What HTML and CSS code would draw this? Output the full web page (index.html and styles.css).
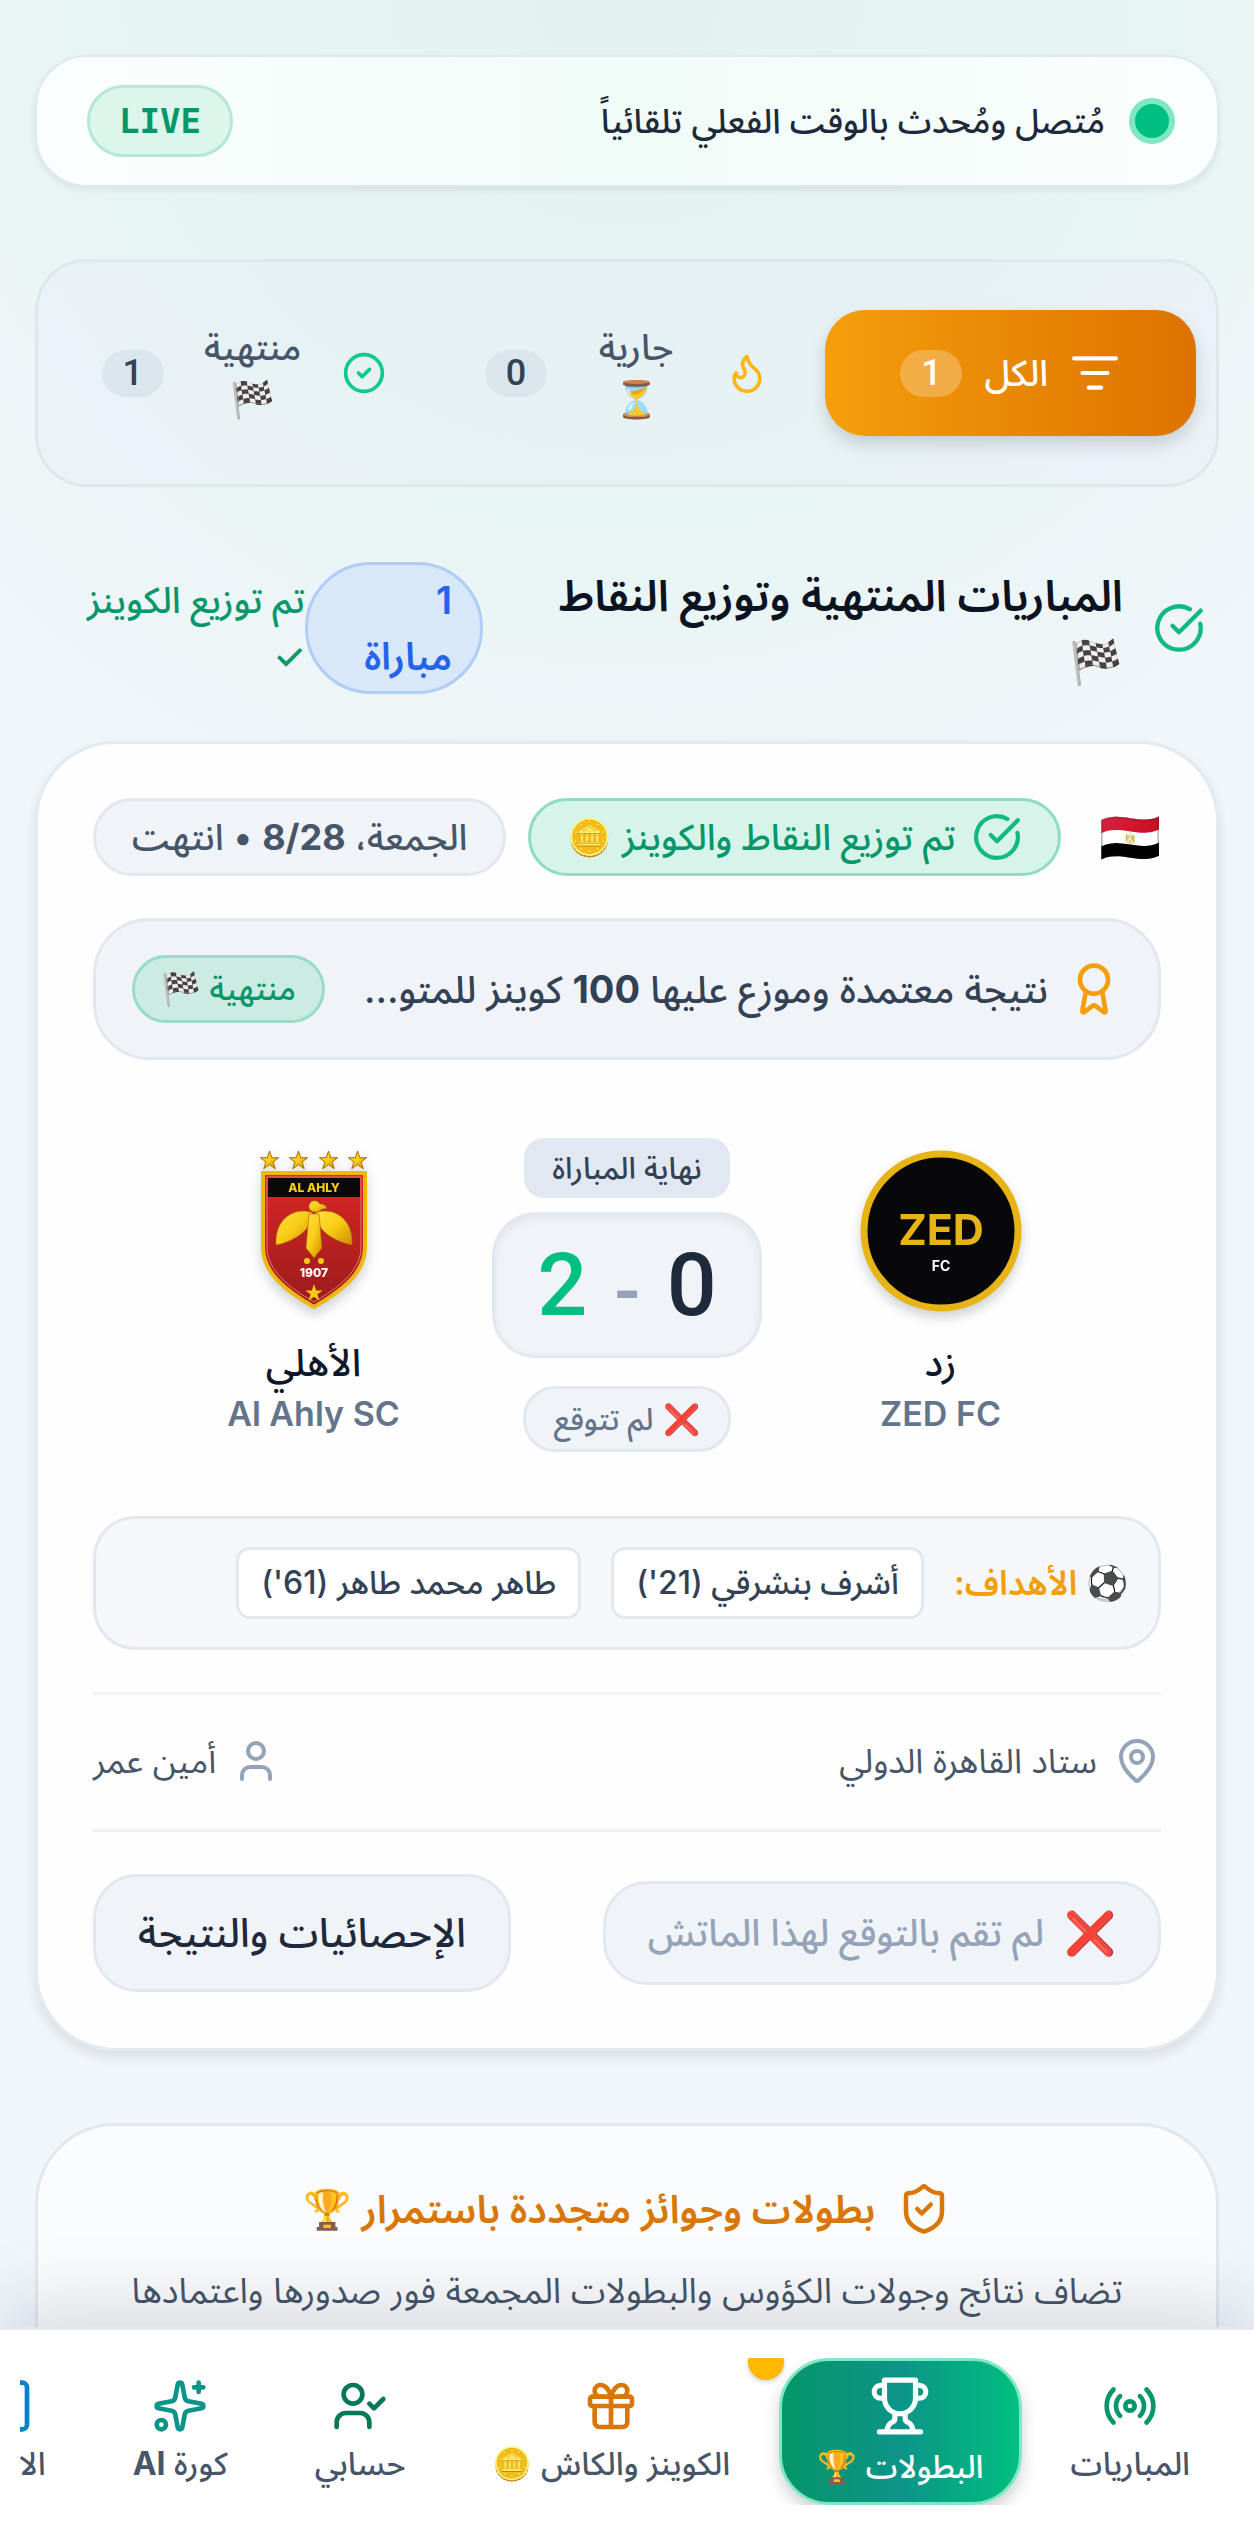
FILE: index.html
```html
<!DOCTYPE html>
<html lang="ar" dir="rtl">
<head>
  <meta charset="UTF-8">
  <meta name="viewport" content="width=device-width, initial-scale=1.0">
  <meta name="theme-color" content="#059669">
  <title>البطولات</title>
  <link rel="stylesheet" href="styles.css">
</head>
<body>
  <!-- Shared icons -->
  <svg class="hidden" aria-hidden="true">
    <symbol id="icon-check" viewBox="0 0 24 24">
      <path d="M21.8 10A10 10 0 1 1 17 3.335"/>
      <path d="m9 11 3 3L22 4"/>
    </symbol>
    <symbol id="star" viewBox="0 0 20 20">
      <path d="M10 0l2.4 7.1h7.2l-5.8 4.4 2.2 7.2-6-4.4-6 4.4 2.2-7.2L.4 7.1h7.2z"/>
    </symbol>
  </svg>

  <main class="content">
    <div class="live-bar">
      <span class="live-dot"></span>
      <p>مُتصل ومُحدث بالوقت الفعلي تلقائياً</p>
      <span class="live-tag">LIVE</span>
    </div>

    <div class="filters">
      <button class="filter active">
        <svg class="icon" viewBox="0 0 24 24"><path d="M2 5h20M6 12h12M9 19h6"/></svg>
        <span>الكل</span>
        <span class="count">1</span>
      </button>
      <button class="filter">
        <svg class="icon flame" viewBox="0 0 24 24"><path d="M8.5 14.5A2.5 2.5 0 0 0 11 12c0-1.38-.5-2-1-3-1.072-2.143-.224-4.054 2-6 .5 2.5 2 4.9 4 6.5 2 1.6 3 3.5 3 5.5a7 7 0 1 1-14 0c0-1.153.433-2.294 1-3a2.5 2.5 0 0 0 2.5 2.5z"/></svg>
        <span class="filter-label">جارية ⏳</span>
        <span class="count">0</span>
      </button>
      <button class="filter">
        <svg class="icon done" viewBox="0 0 24 24"><circle cx="12" cy="12" r="10"/><path d="m9 12 2 2 4-4"/></svg>
        <span class="filter-label">منتهية 🏁</span>
        <span class="count">1</span>
      </button>
    </div>

    <div class="section-head">
      <svg class="icon" viewBox="0 0 24 24"><use href="#icon-check"/></svg>
      <h2>المباريات المنتهية وتوزيع النقاط 🏁</h2>
      <span class="match-count">1 مباراة</span>
      <span class="paid">تم توزيع الكوينز ✓</span>
    </div>

    <article class="match">
      <div class="match-top">
        <span class="flag">🇪🇬</span>
        <span class="pill pill-green">
          <svg class="icon" viewBox="0 0 24 24"><use href="#icon-check"/></svg>
          تم توزيع النقاط والكوينز 🪙
        </span>
        <span class="pill"><span>الجمعة، <b>8/28</b> • انتهت</span></span>
      </div>

      <div class="notice">
        <svg class="icon" viewBox="0 0 24 24"><path d="m15.477 12.89 1.515 8.526a.5.5 0 0 1-.81.47l-3.58-2.687a1 1 0 0 0-1.197 0l-3.586 2.686a.5.5 0 0 1-.81-.469l1.514-8.526"/><circle cx="12" cy="8" r="6"/></svg>
        <p>نتيجة معتمدة وموزع عليها <b>100</b> كوينز للمتوقعين</p>
        <span class="tag">منتهية 🏁</span>
      </div>

      <div class="teams">
        <div class="team">
          <svg class="crest" viewBox="0 0 162 162">
            <circle cx="81" cy="81" r="77" fill="#08080a" stroke="#e7b416" stroke-width="7"/>
            <text x="81" y="95" font-size="43" font-weight="700" fill="#e7b416">ZED</text>
            <text x="81" y="121" font-size="14" font-weight="700" fill="#fff">FC</text>
          </svg>
          <h3>زد</h3>
          <span class="team-en">ZED FC</span>
        </div>

        <div class="result">
          <span class="result-state">نهاية المباراة</span>
          <div class="score">
            <span>0</span>
            <span class="dash">-</span>
            <span class="winner">2</span>
          </div>
          <span class="result-guess"><span class="cross">❌</span> لم تتوقع</span>
        </div>

        <div class="team">
          <svg class="crest" viewBox="0 0 110 162">
            <defs>
              <linearGradient id="gold" x1="0" y1="0" x2="1" y2="1">
                <stop offset="0" stop-color="#fde047"/>
                <stop offset="0.5" stop-color="#facc15"/>
                <stop offset="1" stop-color="#ca8a04"/>
              </linearGradient>
              <linearGradient id="red" x1="0" y1="0" x2="0" y2="1">
                <stop offset="0" stop-color="#dc2626"/>
                <stop offset="1" stop-color="#991b1b"/>
              </linearGradient>
            </defs>
            <g fill="url(#gold)" stroke="#a16207">
              <use href="#star" x="1" y="1" width="19" height="19"/>
              <use href="#star" x="30" y="1" width="19" height="19"/>
              <use href="#star" x="60" y="1" width="19" height="19"/>
              <use href="#star" x="89" y="1" width="19" height="19"/>
            </g>
            <path d="M4 23h102v74c0 27-25 45-51 60C29 142 4 124 4 97z" fill="url(#red)" stroke="#efb810" stroke-width="4"/>
            <path d="M8 27h94v70c0 24-23 41-47 55C31 138 8 121 8 97z" fill="none" stroke="#e8776e"/>
            <path d="M9 28h92v19H9z" fill="#0a0a0a"/>
            <text x="55" y="42" font-size="12" font-weight="800" fill="#facc15">AL AHLY</text>
            <g fill="url(#gold)" stroke="#a16207" stroke-width=".6">
              <path d="M54 63C37 56 15 68 17 95c12-2 28-10 33-20z"/>
              <path d="M56 63c17-7 39 5 37 32-12-2-28-10-33-20z"/>
              <path d="M50 64h10l3 34-8 10-8-10z"/>
              <path d="M50 58c-1-7 7-10 11-4 4 0 7 2 7 5-4-1-6 1-9 3-3 0-8 0-9-4z"/>
            </g>
            <circle cx="48" cy="111" r="3" fill="#facc15"/>
            <circle cx="62" cy="111" r="3" fill="#facc15"/>
            <text x="55" y="127" font-size="12" font-weight="800" fill="#fff">1907</text>
            <use href="#star" x="46" y="134" width="18" height="18" fill="#facc15"/>
          </svg>
          <h3>الأهلي</h3>
          <span class="team-en">Al Ahly SC</span>
        </div>
      </div>

      <div class="goals">
        <span class="goals-title">⚽ الأهداف:</span>
        <span class="goal">أشرف بنشرقي (21')</span>
        <span class="goal">طاهر محمد طاهر (61')</span>
      </div>

      <div class="meta">
        <span>
          <svg class="icon" viewBox="0 0 24 24"><path d="M20 10c0 4.993-5.539 10.193-7.399 11.799a1 1 0 0 1-1.202 0C9.539 20.193 4 14.993 4 10a8 8 0 0 1 16 0"/><circle cx="12" cy="10" r="3"/></svg>
          ستاد القاهرة الدولي
        </span>
        <span>
          <svg class="icon" viewBox="0 0 24 24"><path d="M19 21v-2a4 4 0 0 0-4-4H9a4 4 0 0 0-4 4v2"/><circle cx="12" cy="7" r="4"/></svg>
          أمين عمر
        </span>
      </div>

      <div class="actions">
        <button class="btn btn-muted" disabled><span class="cross">❌</span> لم تقم بالتوقع لهذا الماتش</button>
        <button class="btn">الإحصائيات والنتيجة</button>
      </div>
    </article>

    <section class="promo">
      <h2>
        <svg class="icon" viewBox="0 0 24 24"><path d="M20 13c0 5-3.500 7.500-7.660 8.950a1 1 0 0 1-.67-.01C7.500 20.500 4 18 4 13V6a1 1 0 0 1 1-1c2 0 4.500-1.200 6.240-2.720a1.170 1.170 0 0 1 1.520 0C14.510 3.810 17 5 19 5a1 1 0 0 1 1 1z"/><path d="m9 12 2 2 4-4"/></svg>
        بطولات وجوائز متجددة باستمرار 🏆
      </h2>
      <p>تضاف نتائج وجولات الكؤوس والبطولات المجمعة فور صدورها واعتمادها</p>
    </section>
  </main>

  <nav class="bottom-nav">
    <div class="nav-track">
      <a href="#" class="nav-item matches">
        <svg class="icon" viewBox="0 0 24 24"><path d="M16.247 7.761a6 6 0 0 1 0 8.478M19.075 4.933a10 10 0 0 1 0 14.134M4.925 19.067a10 10 0 0 1 0-14.134M7.753 16.239a6 6 0 0 1 0-8.478"/><circle cx="12" cy="12" r="2"/></svg>
        <span>المباريات</span>
      </a>
      <a href="#" class="nav-item active">
        <svg class="icon" viewBox="0 0 24 24"><path d="M6 9H4.500a2.500 2.500 0 0 1 0-5H6M18 9h1.500a2.500 2.500 0 0 0 0-5H18M4 22h16M10 14.660V17c0 .55-.47.98-.97 1.210C7.850 18.750 7 20.240 7 22M14 14.660V17c0 .55.47.98.97 1.210C16.150 18.750 17 20.240 17 22M18 2H6v7a6 6 0 0 0 12 0V2Z"/></svg>
        <span>البطولات 🏆</span>
      </a>
      <a href="#" class="nav-item coins">
        <svg class="icon" viewBox="0 0 24 24"><rect x="3" y="8" width="18" height="4" rx="1"/><path d="M12 8v13M19 12v7a2 2 0 0 1-2 2H7a2 2 0 0 1-2-2v-7M7.500 8a2.500 2.500 0 0 1 0-5A4.800 8 0 0 1 12 8a4.800 8 0 0 1 4.500-5 2.500 2.500 0 0 1 0 5"/></svg>
        <span>الكوينز والكاش 🪙</span>
        <i class="nav-badge"></i>
      </a>
      <a href="#" class="nav-item account">
        <svg class="icon" viewBox="0 0 24 24"><path d="m16 11 2 2 4-4M16 21v-2a4 4 0 0 0-4-4H6a4 4 0 0 0-4 4v2"/><circle cx="9" cy="7" r="4"/></svg>
        <span>حسابي</span>
      </a>
      <a href="#" class="nav-item ai">
        <svg class="icon" viewBox="0 0 24 24"><path d="M11.017 2.814a1 1 0 0 1 1.966 0l1.051 5.558a2 2 0 0 0 1.594 1.594l5.558 1.051a1 1 0 0 1 0 1.966l-5.558 1.051a2 2 0 0 0-1.594 1.594l-1.051 5.558a1 1 0 0 1-1.966 0l-1.051-5.558a2 2 0 0 0-1.594-1.594l-5.558-1.051a1 1 0 0 1 0-1.966l5.558-1.051a2 2 0 0 0 1.594-1.594zM20 2v4M22 4h-4"/><circle cx="4" cy="20" r="2"/></svg>
        <span>كورة <b>AI</b></span>
      </a>
      <a href="#" class="nav-item news">
        <svg class="icon" viewBox="0 0 24 24"><rect x="3" y="2" width="18" height="20" rx="2"/><path d="M7 7h10M7 12h10M7 17h6"/></svg>
        <span>الاخبار</span>
      </a>
    </div>
  </nav>
</body>
</html>
```

FILE: styles.css
```css
:root {
  --text: #1e293b;
  --text-soft: #475569;
  --text-muted: #64748b;
  --surface: #f0f4f9;
  --border: #e2e8f0;
  --green: #059669;
  --green-bright: #10b981;
  --amber: #d97706;
  --font: Inter, "Noto Sans Arabic", "Noto Sans", "DejaVu Sans", sans-serif;
}

* {
  box-sizing: border-box;
}

body {
  height: 100vh;
  margin: 0;
  display: flex;
  flex-direction: column;
  font-family: var(--font);
  font-size: 34px;
  font-weight: 500;
  line-height: 52px;
  color: var(--text);
  background: radial-gradient(ellipse 75% 900px at 50% 0, #e3f2f1, #e7f4f4 55%, #f1f6fa);
}

h2, h3, p {
  margin: 0;
}

button {
  font: inherit;
  color: inherit;
  cursor: pointer;
}

.hidden {
  position: absolute;
  width: 0;
  height: 0;
}

.icon {
  flex: none;
  width: 44px;
  height: 44px;
  fill: none;
  stroke: currentColor;
  stroke-width: 2;
  stroke-linecap: round;
  stroke-linejoin: round;
}

.content {
  flex: 1;
  min-height: 0;
  overflow: hidden;
  padding: 55px 35px 0;
}

/* Live bar */
.live-bar {
  display: flex;
  align-items: center;
  gap: 24px;
  height: 132px;
  padding: 0 42px 0 50px;
  border: 2px solid #dfe9ec;
  border-radius: 52px;
  background: linear-gradient(90deg, #fbfefe, #f0fcf7, #fbfefe);
  box-shadow: 0 3px 6px rgba(15, 23, 42, 0.08);
}

.live-dot {
  width: 46px;
  height: 46px;
  border: 6px solid #7fe7c4;
  border-radius: 50%;
  background: #00bf80;
}

.live-tag {
  margin-right: auto;
  padding: 7px 29px;
  border: 3px solid #b5e8d6;
  border-radius: 36px;
  background: #dcf6ec;
  color: var(--green);
  font-family: "DejaVu Sans Mono", monospace;
  font-weight: 700;
}

/* Filters */
.filters {
  display: grid;
  grid-template-columns: repeat(3, 1fr);
  align-items: center;
  gap: 12px;
  height: 228px;
  margin-top: 72px;
  padding: 0 20px;
  border: 3px solid #dde7ec;
  border-radius: 52px;
  background: rgba(232, 239, 246, 0.5);
}

.filter {
  display: flex;
  align-items: center;
  justify-content: center;
  gap: 22px;
  height: 126px;
  padding: 0 32px;
  border: 0;
  border-radius: 40px;
  background: none;
  color: var(--text-soft);
  font-size: 36px;
}

.filter.active {
  background: linear-gradient(90deg, #f59e0b, #dd7200);
  box-shadow: 0 8px 16px rgba(15, 23, 42, 0.16);
  color: #fff;
}

.filter.active .icon {
  width: 50px;
  height: 50px;
}

.filter-label {
  width: 134px;
  padding: 0 10px;
}

.flame {
  color: #fbb614;
}

.done {
  color: #10c98c;
}

.count {
  min-width: 62px;
  border-radius: 24px;
  background: #dbe6ec;
  color: #334155;
  font-family: Roboto, sans-serif;
  line-height: 47px;
}

.active .count {
  background: rgba(255, 255, 255, 0.25);
  color: #fff;
}

/* Section heading */
.section-head {
  display: flex;
  align-items: center;
  margin: 75px 14px 47px 44px;
}

.section-head .icon {
  width: 52px;
  height: 52px;
  margin-left: 30px;
  color: var(--green-bright);
}

.section-head h2 {
  flex: 1;
  padding-left: 40px;
  font-size: 43px;
  font-weight: 600;
  line-height: 66px;
  color: #0b1220;
}

.match-count {
  width: 178px;
  padding: 7px 28px 7px 40px;
  border: 3px solid #b0cdf5;
  border-radius: 66px;
  background: #d9e8f9;
  color: #2563eb;
  font-size: 38px;
  font-weight: 600;
  line-height: 56px;
}

.paid {
  width: 226px;
  color: var(--green);
  font-size: 36px;
  line-height: 56px;
}

/* Match card */
.match {
  padding: 54px 55px 56px;
  border: 3px solid #e3eaf0;
  border-radius: 80px;
  background: #fefefe;
  box-shadow: 0 6px 12px rgba(15, 23, 42, 0.1);
}

.match-top {
  display: flex;
  align-items: center;
  gap: 22px;
}

.flag {
  margin-left: auto;
  font-size: 50px;
}

.pill {
  display: flex;
  align-items: center;
  gap: 16px;
  height: 78px;
  padding: 0 36px;
  border: 3px solid var(--border);
  border-radius: 39px;
  background: var(--surface);
  color: var(--text-soft);
  font-size: 36px;
  white-space: nowrap;
}

.pill-green {
  border-color: #8fdcc0;
  background: #d6f4e9;
  color: var(--green);
}

.pill .icon {
  width: 50px;
  height: 50px;
  color: var(--green-bright);
}

.notice {
  display: flex;
  align-items: center;
  gap: 34px;
  height: 142px;
  margin-top: 42px;
  padding: 0 36px;
  border: 3px solid var(--border);
  border-radius: 56px;
  background: var(--surface);
}

.notice .icon {
  width: 56px;
  height: 56px;
  margin-left: -16px;
  color: #f59e0b;
}

.notice p {
  flex: 1;
  overflow: hidden;
  font-size: 38px;
  line-height: 66px;
  white-space: nowrap;
  text-overflow: ellipsis;
  color: #334155;
}

.tag {
  padding: 5px 26px;
  border: 3px solid #97dcc6;
  border-radius: 34px;
  background: #ccebe3;
  color: var(--green);
  font-size: 32px;
}

/* Teams */
.teams {
  display: grid;
  grid-template-columns: 1fr 270px 1fr;
  align-items: center;
  margin-top: 78px;
  padding: 0 42px;
}

.team,
.result {
  display: flex;
  flex-direction: column;
  align-items: center;
}

.crest {
  height: 162px;
  filter: drop-shadow(0 6px 6px rgba(15, 23, 42, 0.2));
}

.crest text {
  text-anchor: middle;
}

.team h3 {
  margin-top: 24px;
  font-size: 38px;
  font-weight: 500;
  color: #0f172a;
}

.team-en {
  color: var(--text-muted);
  font-weight: 600;
}

.result-state {
  padding: 4px 28px;
  border-radius: 20px;
  background: #e1e8f1;
  color: #334155;
  font-size: 30px;
}

.score {
  display: flex;
  align-items: center;
  justify-content: center;
  gap: 27px;
  width: 270px;
  height: 146px;
  margin: 14px 0 28px;
  border: 3px solid var(--border);
  border-radius: 44px;
  background: var(--surface);
  box-shadow: inset 0 4px 8px rgba(15, 23, 42, 0.06);
  font-family: Roboto, sans-serif;
  font-size: 88px;
}

.dash {
  font-family: "Noto Sans", sans-serif;
  font-size: 80px;
  color: #94a3b8;
}

.winner {
  color: #00bf80;
}

.result-guess {
  display: flex;
  gap: 10px;
  padding: 4px 28px;
  border: 3px solid var(--border);
  border-radius: 32px;
  background: var(--surface);
  color: var(--text-muted);
  font-size: 30px;
}

.goals {
  display: flex;
  align-items: center;
  gap: 30px;
  height: 134px;
  margin-top: 64px;
  padding: 0 30px;
  border: 3px solid var(--border);
  border-radius: 42px;
  background: #f5f7fb;
}

.goals-title {
  color: #f59e0b;
  font-weight: 600;
}

.goal {
  padding: 7px 22px;
  border: 3px solid var(--border);
  border-radius: 14px;
  background: #fff;
  color: #334155;
  font-size: 32px;
}

.meta {
  display: flex;
  justify-content: space-between;
  margin: 42px 0;
  padding: 40px 0 42px;
  border: solid #f0f3f6;
  border-width: 3px 0;
  font-weight: 400;
  color: var(--text-soft);
}

.meta span {
  display: flex;
  align-items: center;
  gap: 16px;
}

.meta .icon {
  width: 48px;
  height: 48px;
  color: #94a3b8;
}

.actions {
  display: flex;
  align-items: center;
  justify-content: space-between;
}

.btn {
  display: flex;
  align-items: center;
  gap: 20px;
  height: 118px;
  padding: 0 42px;
  border: 3px solid var(--border);
  border-radius: 44px;
  background: var(--surface);
  font-size: 40px;
}

.btn-muted {
  height: 104px;
  color: #94a3b8;
  font-size: 37px;
}

.btn .cross {
  font-size: 42px;
}

/* Promo */
.promo {
  height: 400px;
  margin-top: 72px;
  padding: 56px 50px;
  border: 3px solid var(--border);
  border-radius: 80px;
  background: #fbfcfe;
  text-align: center;
}

.promo h2 {
  display: flex;
  align-items: center;
  justify-content: center;
  gap: 22px;
  font-size: 39px;
  font-weight: 600;
  color: var(--amber);
}

.promo .icon {
  width: 54px;
  height: 54px;
}

.promo p {
  margin-top: 28px;
  font-size: 35px;
  font-weight: 400;
  color: var(--text-soft);
}

/* Bottom navigation */
.bottom-nav {
  position: relative;
  flex: none;
  height: 195px;
  padding: 28px 20px 0;
  border-top: 3px solid var(--border);
  background: #fff;
  box-shadow: 0 -16px 80px rgba(15, 23, 42, 0.16);
}

.nav-track {
  display: flex;
  gap: 11px;
  height: 147px;
  padding-right: 6px;
  overflow: hidden;
}

.nav-item {
  position: relative;
  flex: none;
  display: flex;
  flex-direction: column;
  align-items: center;
  justify-content: center;
  gap: 8px;
  padding: 0 38px;
  border-radius: 50px;
  color: var(--text-soft);
  font-size: 32px;
  line-height: 44px;
  text-decoration: none;
}

.nav-item .icon {
  width: 56px;
  height: 56px;
}

.nav-item.active {
  border: 3px solid #7fe7c4;
  padding: 0 35px;
  background: linear-gradient(90deg, #059669, #0d9488 50%, #00bf80);
  box-shadow: 0 8px 16px rgba(15, 23, 42, 0.2);
  color: #fff;
}

.nav-item.active .icon {
  width: 62px;
  height: 62px;
}

.matches .icon {
  color: #059669;
}

.coins .icon {
  color: var(--amber);
}

.account .icon {
  color: #047857;
}

.ai .icon {
  color: #0d9488;
}

.news .icon {
  color: #0284c7;
}

.nav-badge {
  position: absolute;
  top: -14px;
  right: -16px;
  width: 36px;
  height: 36px;
  border-radius: 50%;
  background: #ffb900;
  box-shadow: 0 2px 4px rgba(15, 23, 42, 0.2);
}
```
